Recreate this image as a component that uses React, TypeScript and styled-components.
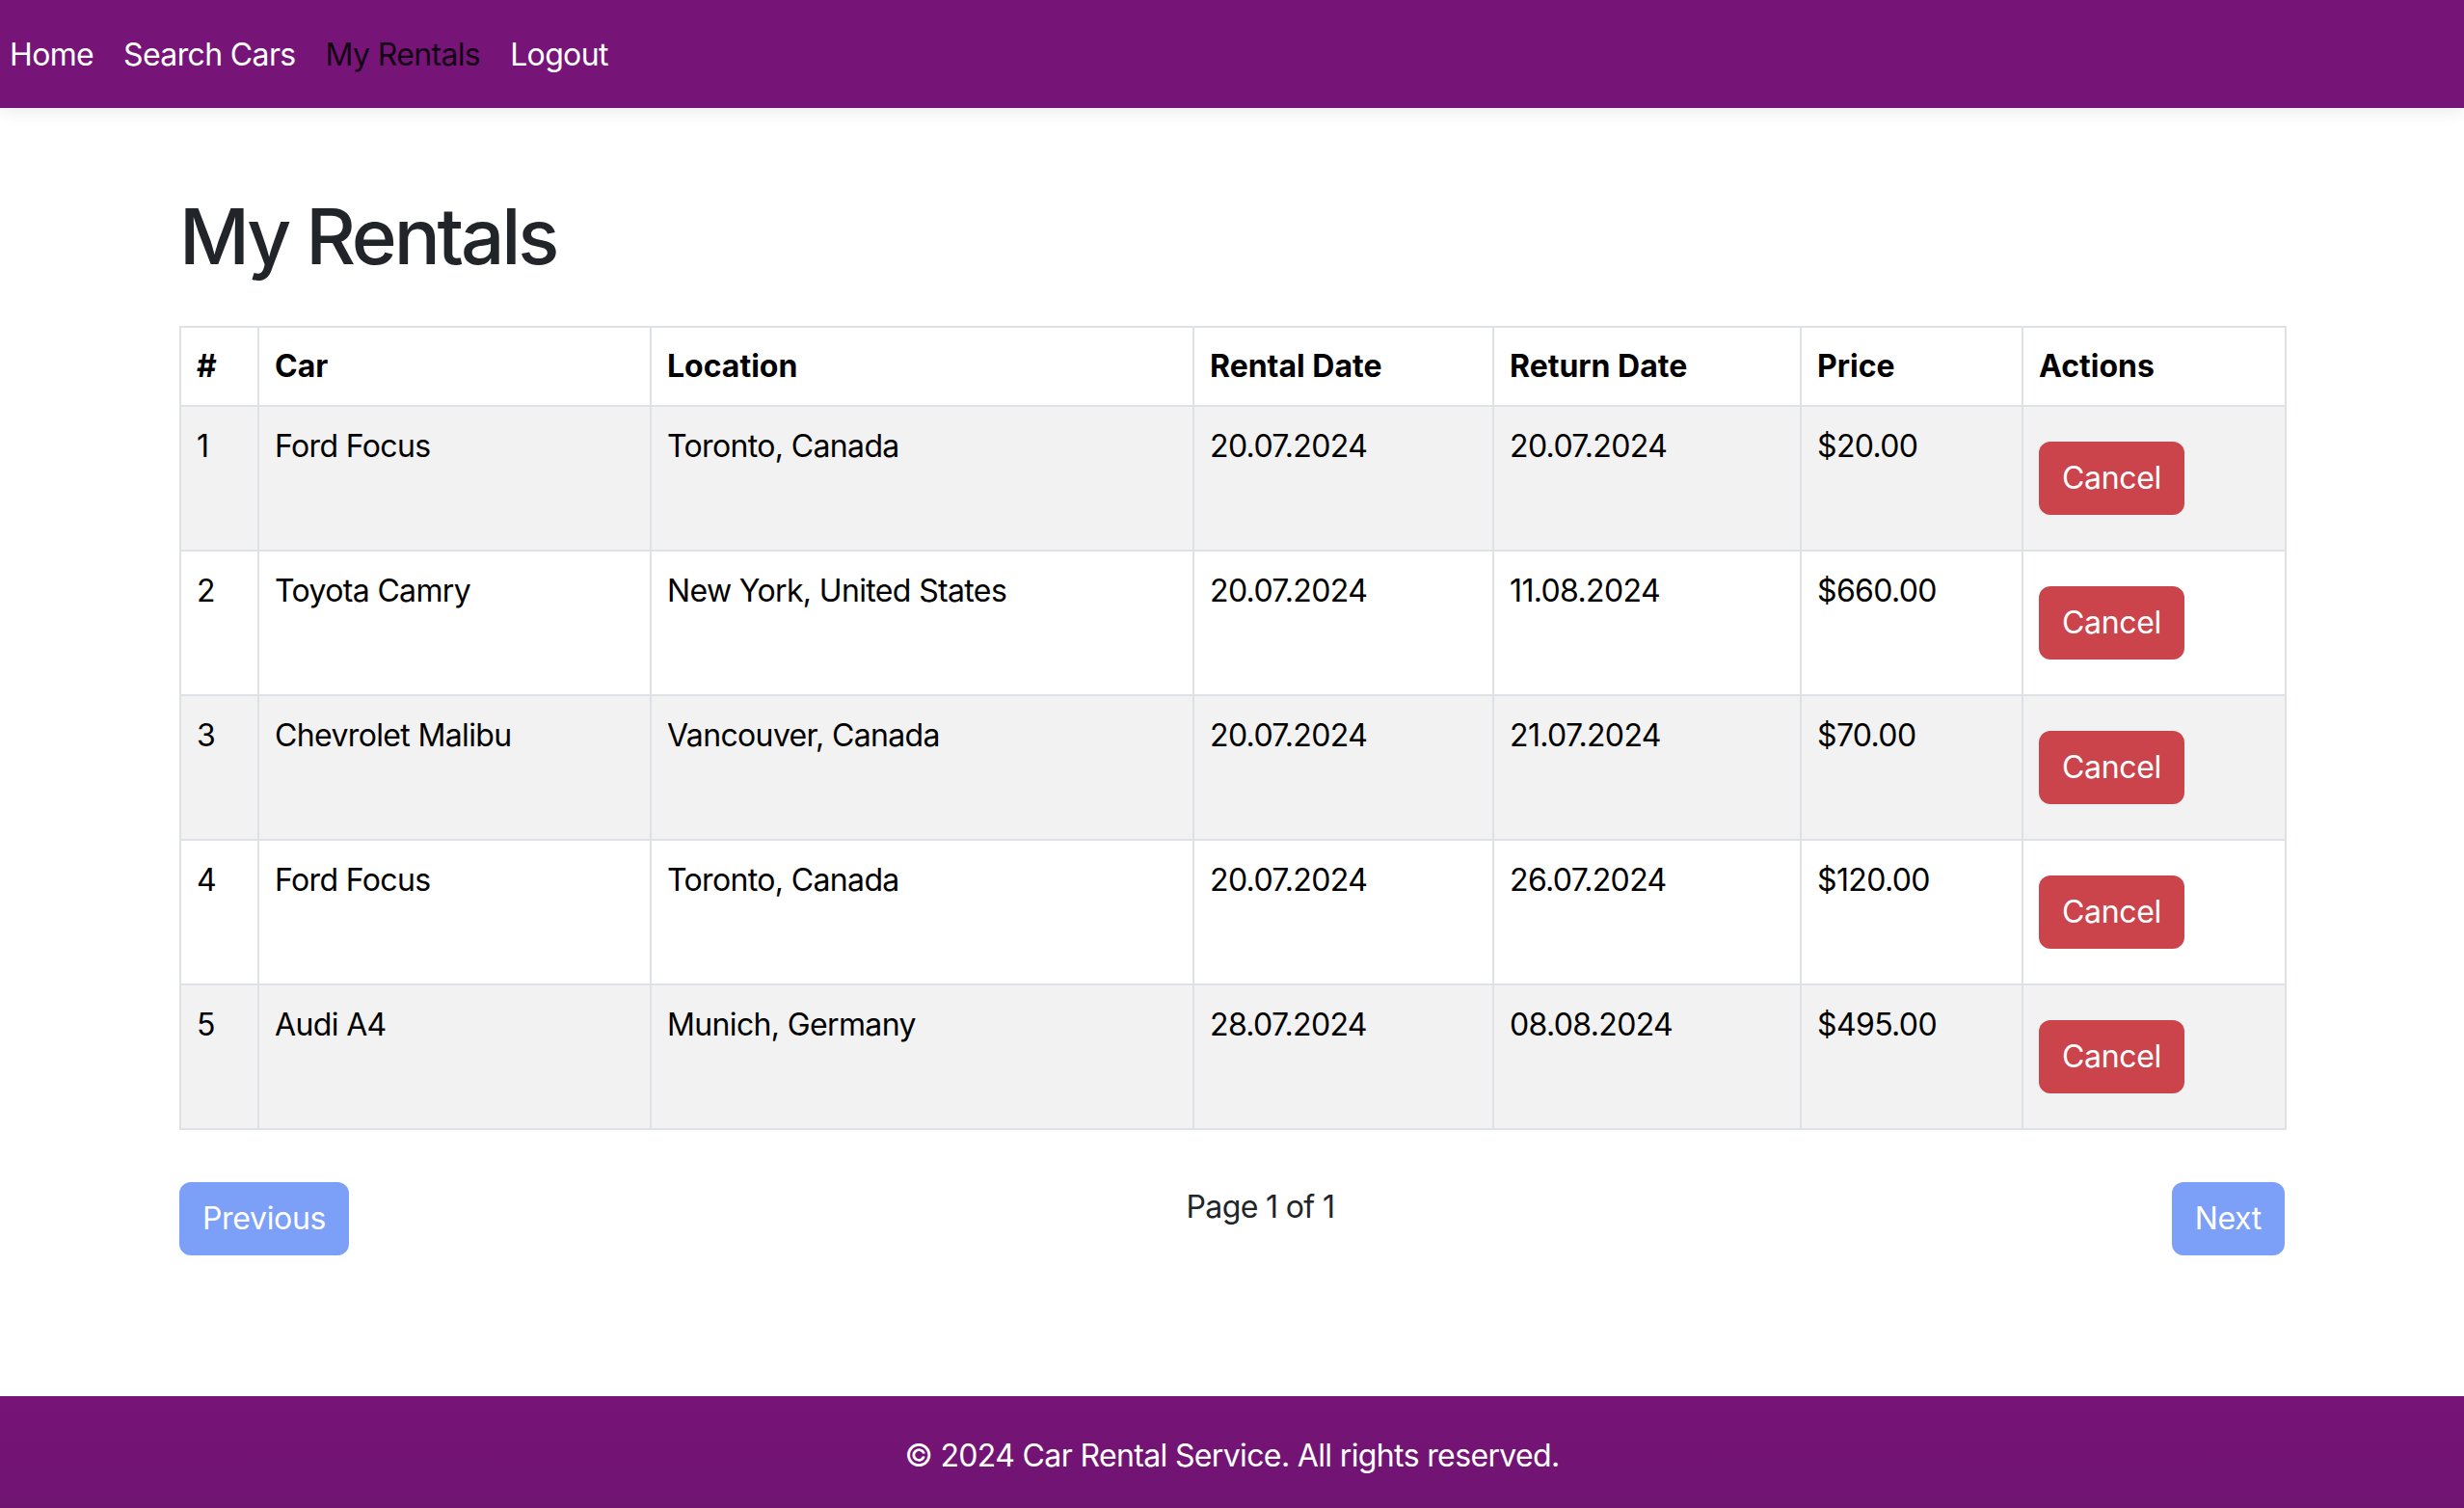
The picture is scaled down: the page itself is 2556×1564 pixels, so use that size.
import styled, { createGlobalStyle } from "styled-components";

const GlobalStyle = createGlobalStyle`
  html, body {
    margin: 0;
    padding: 0;
    background: #ffffff;
  }
  body {
    font-family: "Inter", "Noto Sans", "Liberation Sans", sans-serif;
    font-size: 32px;
    line-height: 48px;
    letter-spacing: -0.02em;
    color: #212529;
  }
  * {
    box-sizing: border-box;
  }
`;

type Rental = {
  id: number;
  car: string;
  location: string;
  rentalDate: string;
  returnDate: string;
  price: string;
};

const rentals: Rental[] = [
  { id: 1, car: "Ford Focus", location: "Toronto, Canada", rentalDate: "20.07.2024", returnDate: "20.07.2024", price: "$20.00" },
  { id: 2, car: "Toyota Camry", location: "New York, United States", rentalDate: "20.07.2024", returnDate: "11.08.2024", price: "$660.00" },
  { id: 3, car: "Chevrolet Malibu", location: "Vancouver, Canada", rentalDate: "20.07.2024", returnDate: "21.07.2024", price: "$70.00" },
  { id: 4, car: "Ford Focus", location: "Toronto, Canada", rentalDate: "20.07.2024", returnDate: "26.07.2024", price: "$120.00" },
  { id: 5, car: "Audi A4", location: "Munich, Germany", rentalDate: "28.07.2024", returnDate: "08.08.2024", price: "$495.00" },
];

const columns = [
  { label: "#", width: 81 },
  { label: "Car", width: 407 },
  { label: "Location", width: 563 },
  { label: "Rental Date", width: 311 },
  { label: "Return Date", width: 319 },
  { label: "Price", width: 230 },
  { label: "Actions", width: 273 },
];

const Page = styled.div`
  min-height: 100vh;
  display: flex;
  flex-direction: column;
`;

const Navbar = styled.nav`
  height: 112px;
  background-color: #761477;
  display: flex;
  align-items: center;
  gap: 31px;
  padding: 2px 10px 0;
  box-shadow: 0 4px 16px rgba(0, 0, 0, 0.08);
  position: relative;
  z-index: 1;
`;

const NavLink = styled.a<{ $active?: boolean }>`
  color: ${(p) => (p.$active ? "rgba(0, 0, 0, 0.85)" : "#ffffff")};
  text-decoration: none;
  font-size: 32px;
  line-height: 48px;
  cursor: pointer;
`;

const Main = styled.main`
  flex: 1;
  width: 2184px;
  margin: 0 auto;
  padding: 85px 0 60px;
`;

const Heading = styled.h1`
  margin: 0 0 45px;
  font-size: 80px;
  line-height: 96px;
  font-weight: 500;
  letter-spacing: -0.04em;
  color: #212529;
`;

const Table = styled.table`
  width: 100%;
  table-layout: fixed;
  border-collapse: collapse;
  border: 2px solid #dee2e6;
  color: #000;
`;

const Th = styled.th`
  text-align: left;
  font-weight: 700;
  letter-spacing: 0;
  padding: 16px;
  border: 2px solid #dee2e6;
  vertical-align: top;
`;

const Row = styled.tr<{ $striped: boolean }>`
  background-color: ${(p) => (p.$striped ? "#f2f2f2" : "#ffffff")};
`;

const Td = styled.td`
  padding: 17px 16px 15px;
  border: 2px solid #dee2e6;
  vertical-align: top;
`;

const Button = styled.button<{ $variant: "danger" | "primary" }>`
  font-family: inherit;
  font-size: 32px;
  line-height: 48px;
  letter-spacing: -0.01em;
  padding: 14px 24px;
  border: none;
  border-radius: 12px;
  color: #ffffff;
  cursor: pointer;
  background-color: ${(p) => (p.$variant === "danger" ? "#cb444c" : "#7ca0f8")};
`;

const CancelButton = styled(Button)`
  display: block;
  margin: 19px 0 21px;
`;

const Pagination = styled.div`
  display: flex;
  justify-content: space-between;
  align-items: flex-start;
  margin-top: 54px;
`;

const PageInfo = styled.span`
  color: #212529;
  font-size: 32px;
  line-height: 48px;
  padding-top: 2px;
`;

const Footer = styled.footer`
  background: linear-gradient(180deg, #761477 0%, #701472 100%);
  color: #ffffff;
  text-align: center;
  padding: 38px 0 30px;
  font-size: 32px;
  line-height: 48px;
`;

const App = () => {
  return (
    <Page>
      <GlobalStyle />
      <Navbar>
        <NavLink>Home</NavLink>
        <NavLink>Search Cars</NavLink>
        <NavLink $active>My Rentals</NavLink>
        <NavLink>Logout</NavLink>
      </Navbar>

      <Main>
        <Heading>My Rentals</Heading>
        <Table>
          <colgroup>
            {columns.map((c) => (
              <col key={c.label} style={{ width: c.width }} />
            ))}
          </colgroup>
          <thead>
            <tr>
              {columns.map((c) => (
                <Th key={c.label}>{c.label}</Th>
              ))}
            </tr>
          </thead>
          <tbody>
            {rentals.map((r, i) => (
              <Row key={r.id} $striped={i % 2 === 0}>
                <Td>{r.id}</Td>
                <Td>{r.car}</Td>
                <Td>{r.location}</Td>
                <Td>{r.rentalDate}</Td>
                <Td>{r.returnDate}</Td>
                <Td>{r.price}</Td>
                <Td>
                  <CancelButton $variant="danger">Cancel</CancelButton>
                </Td>
              </Row>
            ))}
          </tbody>
        </Table>

        <Pagination>
          <Button $variant="primary">Previous</Button>
          <PageInfo>Page 1 of 1</PageInfo>
          <Button $variant="primary">Next</Button>
        </Pagination>
      </Main>

      <Footer>© 2024 Car Rental Service. All rights reserved.</Footer>
    </Page>
  );
};

export default App;
